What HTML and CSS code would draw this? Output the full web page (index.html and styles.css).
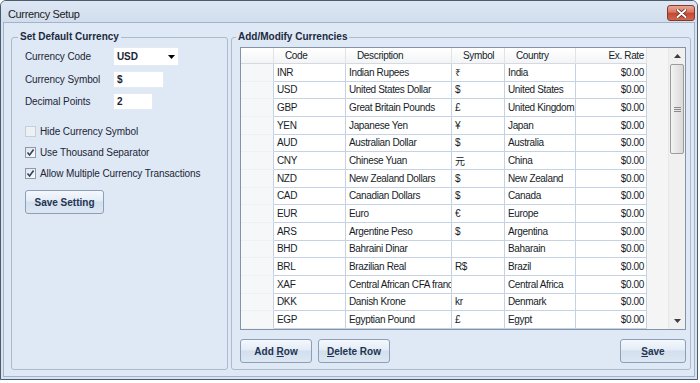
FILE: index.html
```html
<!DOCTYPE html>
<html lang="en">
<head>
    <meta charset="UTF-8">
    <meta name="viewport" content="width=device-width, initial-scale=1.0">
    <title>Currency Setup</title>
    <link rel="stylesheet" href="styles.css">
</head>
<body>

    <div class="window">
        <!-- title bar -->
        <div class="title-bar">
            <span class="title">Currency Setup</span>
            <button class="close-btn" aria-label="Close">
                <svg width="11" height="9" viewBox="0 0 11 9">
                    <path d="M1.5 1 L9.5 8 M9.5 1 L1.5 8" stroke="#5a1d12" stroke-width="3.4" stroke-linecap="round"/>
                    <path d="M1.5 1 L9.5 8 M9.5 1 L1.5 8" stroke="#ffffff" stroke-width="2" stroke-linecap="round"/>
                </svg>
            </button>
        </div>

        <div class="client">
            <!-- default currency settings -->
            <fieldset class="group group-default">
                <legend>Set Default Currency</legend>
                <div class="settings">
                    <div class="form-rows">
                        <div class="form-row">
                            <span class="form-label">Currency Code</span>
                            <div class="combo">
                                <span>USD</span>
                                <svg width="7" height="4" viewBox="0 0 7 4"><polygon points="0,0 7,0 3.5,4" fill="#000"/></svg>
                            </div>
                        </div>
                        <div class="form-row">
                            <span class="form-label">Currency Symbol</span>
                            <div class="text-box symbol-box">$</div>
                        </div>
                        <div class="form-row">
                            <span class="form-label">Decimal Points</span>
                            <div class="text-box decimal-box">2</div>
                        </div>
                    </div>

                    <div class="check-list">
                        <div class="check-row disabled">
                            <span class="check"></span>
                            <span>Hide Currency Symbol</span>
                        </div>
                        <div class="check-row">
                            <span class="check">
                                <svg width="9" height="9" viewBox="0 0 9 9"><path d="M1.5 4.5 L3.6 7 L7.6 1.5" fill="none" stroke="#34435c" stroke-width="1.6"/></svg>
                            </span>
                            <span>Use Thousand Separator</span>
                        </div>
                        <div class="check-row">
                            <span class="check">
                                <svg width="9" height="9" viewBox="0 0 9 9"><path d="M1.5 4.5 L3.6 7 L7.6 1.5" fill="none" stroke="#34435c" stroke-width="1.6"/></svg>
                            </span>
                            <span>Allow Multiple Currency Transactions</span>
                        </div>
                    </div>

                    <button class="btn save-setting-btn">Save Setting</button>
                </div>
            </fieldset>

            <!-- currency list -->
            <fieldset class="group group-currencies">
                <legend>Add/Modify Currencies</legend>
                <div class="currencies">
                    <div class="grid">
                        <div class="grid-table">
                            <div class="grid-row head">
                                <div class="cell row-head"></div>
                                <div class="cell">Code</div>
                                <div class="cell">Description</div>
                                <div class="cell">Symbol</div>
                                <div class="cell">Country</div>
                                <div class="cell num">Ex. Rate</div>
                            </div>
                            <div class="grid-row">
                                <div class="cell row-head"></div>
                                <div class="cell">INR</div>
                                <div class="cell">Indian Rupees</div>
                                <div class="cell">₹</div>
                                <div class="cell">India</div>
                                <div class="cell num">$0.00</div>
                            </div>
                            <div class="grid-row">
                                <div class="cell row-head"></div>
                                <div class="cell">USD</div>
                                <div class="cell">United States Dollar</div>
                                <div class="cell">$</div>
                                <div class="cell">United States</div>
                                <div class="cell num">$0.00</div>
                            </div>
                            <div class="grid-row">
                                <div class="cell row-head"></div>
                                <div class="cell">GBP</div>
                                <div class="cell">Great Britain Pounds</div>
                                <div class="cell">£</div>
                                <div class="cell">United Kingdom</div>
                                <div class="cell num">$0.00</div>
                            </div>
                            <div class="grid-row">
                                <div class="cell row-head"></div>
                                <div class="cell">YEN</div>
                                <div class="cell">Japanese Yen</div>
                                <div class="cell">¥</div>
                                <div class="cell">Japan</div>
                                <div class="cell num">$0.00</div>
                            </div>
                            <div class="grid-row">
                                <div class="cell row-head"></div>
                                <div class="cell">AUD</div>
                                <div class="cell">Australian Dollar</div>
                                <div class="cell">$</div>
                                <div class="cell">Australia</div>
                                <div class="cell num">$0.00</div>
                            </div>
                            <div class="grid-row">
                                <div class="cell row-head"></div>
                                <div class="cell">CNY</div>
                                <div class="cell">Chinese Yuan</div>
                                <div class="cell">元</div>
                                <div class="cell">China</div>
                                <div class="cell num">$0.00</div>
                            </div>
                            <div class="grid-row">
                                <div class="cell row-head"></div>
                                <div class="cell">NZD</div>
                                <div class="cell">New Zealand Dollars</div>
                                <div class="cell">$</div>
                                <div class="cell">New Zealand</div>
                                <div class="cell num">$0.00</div>
                            </div>
                            <div class="grid-row">
                                <div class="cell row-head"></div>
                                <div class="cell">CAD</div>
                                <div class="cell">Canadian Dollars</div>
                                <div class="cell">$</div>
                                <div class="cell">Canada</div>
                                <div class="cell num">$0.00</div>
                            </div>
                            <div class="grid-row">
                                <div class="cell row-head"></div>
                                <div class="cell">EUR</div>
                                <div class="cell">Euro</div>
                                <div class="cell">€</div>
                                <div class="cell">Europe</div>
                                <div class="cell num">$0.00</div>
                            </div>
                            <div class="grid-row">
                                <div class="cell row-head"></div>
                                <div class="cell">ARS</div>
                                <div class="cell">Argentine Peso</div>
                                <div class="cell">$</div>
                                <div class="cell">Argentina</div>
                                <div class="cell num">$0.00</div>
                            </div>
                            <div class="grid-row">
                                <div class="cell row-head"></div>
                                <div class="cell">BHD</div>
                                <div class="cell">Bahraini Dinar</div>
                                <div class="cell"></div>
                                <div class="cell">Baharain</div>
                                <div class="cell num">$0.00</div>
                            </div>
                            <div class="grid-row">
                                <div class="cell row-head"></div>
                                <div class="cell">BRL</div>
                                <div class="cell">Brazilian Real</div>
                                <div class="cell">R$</div>
                                <div class="cell">Brazil</div>
                                <div class="cell num">$0.00</div>
                            </div>
                            <div class="grid-row">
                                <div class="cell row-head"></div>
                                <div class="cell">XAF</div>
                                <div class="cell">Central African CFA franc</div>
                                <div class="cell"></div>
                                <div class="cell">Central Africa</div>
                                <div class="cell num">$0.00</div>
                            </div>
                            <div class="grid-row">
                                <div class="cell row-head"></div>
                                <div class="cell">DKK</div>
                                <div class="cell">Danish Krone</div>
                                <div class="cell">kr</div>
                                <div class="cell">Denmark</div>
                                <div class="cell num">$0.00</div>
                            </div>
                            <div class="grid-row">
                                <div class="cell row-head"></div>
                                <div class="cell">EGP</div>
                                <div class="cell">Egyptian Pound</div>
                                <div class="cell">£</div>
                                <div class="cell">Egypt</div>
                                <div class="cell num">$0.00</div>
                            </div>
                        </div>

                        <!-- vertical scrollbar -->
                        <div class="scrollbar">
                            <div class="scroll-arrow">
                                <svg width="7" height="4" viewBox="0 0 7 4"><polygon points="0,4 7,4 3.5,0" fill="#3c3c3c"/></svg>
                            </div>
                            <div class="scroll-thumb">
                                <svg width="7" height="5" viewBox="0 0 7 5"><path d="M0 0.5 H7 M0 2.5 H7 M0 4.5 H7" stroke="#8a8a8a" stroke-width="1"/></svg>
                            </div>
                            <div class="scroll-track"></div>
                            <div class="scroll-arrow">
                                <svg width="7" height="4" viewBox="0 0 7 4"><polygon points="0,0 7,0 3.5,4" fill="#3c3c3c"/></svg>
                            </div>
                        </div>
                    </div>

                    <div class="button-bar">
                        <button class="btn row-btn">Add <u>R</u>ow</button>
                        <button class="btn row-btn"><u>D</u>elete Row</button>
                        <button class="btn save-btn"><u>S</u>ave</button>
                    </div>
                </div>
            </fieldset>
        </div>
    </div>

</body>
</html>
```

FILE: styles.css
```css
/* base */
* {
    box-sizing: border-box;
}

body {
    margin: 0;
    background-color: #ffffff;
    font-family: 'Liberation Sans', Arial, 'Noto Sans', 'Noto Sans CJK SC', sans-serif;
    font-size: 10px;
    color: #1c2636;
}

/* window frame */
.window {
    width: 698px;
    height: 380px;
    border: 1px solid #4b5a6d;
    border-radius: 6px 6px 0 0;
    background-color: #d8e3f1;
    box-shadow: 0 3px 0 #c6e4ee;
    display: flex;
    flex-direction: column;
}

.title-bar {
    flex: none;
    height: 21px;
    display: flex;
    justify-content: space-between;
    align-items: flex-start;
    padding: 0 2px 0 7px;
    border-radius: 5px 5px 0 0;
    background: linear-gradient(#dde7f4, #d2deee);
}

.title {
    margin-top: 3px;
    line-height: 20px;
    font-size: 11px;
    letter-spacing: -0.35px;
    color: #1b1b1b;
}

.close-btn {
    margin-top: 4px;
    width: 28px;
    height: 16px;
    padding: 0;
    display: flex;
    align-items: center;
    justify-content: center;
    border: 1px solid #83392c;
    border-radius: 3px;
    background: linear-gradient(#eaa897 0%, #d87461 45%, #c3462f 50%, #d1674f 100%);
}

.client {
    flex: 1;
    margin: 0 2px 2px;
    display: flex;
    gap: 3px;
    padding: 8px 3px 6px 7px;
    border: 1px solid #a3b3c8;
    background-color: #dfe9f5;
}

/* group boxes */
.group {
    margin: 0;
    padding: 0;
    min-width: 0;
    border: 1px solid #abbacd;
    border-radius: 3px;
}

.group legend {
    padding: 0 2px;
    font-size: 10px;
    line-height: 12px;
    font-weight: bold;
    color: #1b2940;
}

.group-default {
    width: 217px;
    flex: none;
}
.group-default legend {
    margin-left: 6px;
}

.group-currencies {
    flex: 1;
}
.group-currencies legend {
    margin-left: 4px;
}

/* default currency form */
.settings {
    padding: 4px 0 0 13px;
    letter-spacing: -0.1px;
}

.form-rows {
    display: flex;
    flex-direction: column;
    gap: 5px;
}

.form-row {
    display: flex;
    align-items: center;
}

.form-label {
    width: 88px;
}

.combo {
    width: 66px;
    height: 19px;
    display: flex;
    align-items: center;
    justify-content: space-between;
    padding: 0 3px 0 3px;
    border: 1px solid #e3eaf3;
    background-color: #ffffff;
    font-weight: bold;
}

.text-box {
    height: 17px;
    display: flex;
    align-items: center;
    padding-left: 3px;
    border: 1px solid #e3eaf3;
    background-color: #ffffff;
    font-weight: bold;
}
.symbol-box { width: 51px; }
.decimal-box { width: 40px; }

.check-list {
    margin-top: 15px;
    display: flex;
    flex-direction: column;
    gap: 8px;
}

.check-row {
    height: 13px;
    display: flex;
    align-items: center;
    gap: 4px;
}

.check {
    width: 11px;
    height: 11px;
    display: flex;
    align-items: center;
    justify-content: center;
    border: 1px solid #8e9aab;
    background: linear-gradient(135deg, #dfe3e9, #fbfcfd);
}
.check-row.disabled .check {
    border-color: #c7ced7;
    background: #eef1f4;
}

/* buttons */
.btn {
    height: 24px;
    padding: 0;
    font-family: inherit;
    font-size: 10px;
    font-weight: bold;
    color: #233450;
    border: 1px solid #8d9eb7;
    border-radius: 3px;
    background: linear-gradient(#f4f8fd 0%, #e4ecf7 45%, #d3dfee 50%, #dde7f3 100%);
}

.save-setting-btn {
    margin-top: 10px;
    width: 79px;
}

/* currency grid */
.currencies {
    padding: 4px 4px 0 8px;
    display: flex;
    flex-direction: column;
}

.grid {
    height: 283px;
    display: flex;
    border: 1px solid #8293aa;
    background-color: #f5f5f5;
}

.grid-table {
    flex: 1;
    display: grid;
    grid-template-columns: 33px 72px 106px 53px 71px 71px;
    grid-template-rows: 16px repeat(15, 1fr);
    letter-spacing: -0.35px;
}

.grid-row {
    display: contents;
}

.cell {
    display: flex;
    align-items: center;
    padding: 0 2px 0 3px;
    overflow: hidden;
    white-space: nowrap;
    background-color: #ffffff;
    border-right: 1px solid #c4d2e4;
    border-bottom: 1px solid #c4d2e4;
    color: #161d28;
}

.cell.num {
    justify-content: flex-end;
}

.cell.row-head {
    background-color: #f6f7f9;
    border-bottom-color: #edf0f4;
}

.head .cell {
    padding-left: 11px;
    background: linear-gradient(#ffffff, #f3f4f6);
    border-right-color: #e1e3e6;
    border-bottom-color: #d6d9de;
}
.head .cell.num {
    padding-left: 0;
}

.scrollbar {
    width: 17px;
    flex: none;
    display: flex;
    flex-direction: column;
    background-color: #f0f0f0;
    border-left: 1px solid #e8e8e8;
}

.scroll-arrow {
    height: 16px;
    display: flex;
    align-items: center;
    justify-content: center;
}

.scroll-thumb {
    height: 90px;
    margin: 0 1px 0 1px;
    display: flex;
    align-items: center;
    justify-content: center;
    border: 1px solid #9c9c9c;
    border-radius: 2px;
    background: linear-gradient(90deg, #f3f3f3, #d9d9d9);
}

.scroll-track {
    flex: 1;
}

.button-bar {
    margin-top: 9px;
    display: flex;
    gap: 6px;
}

.row-btn {
    width: 72px;
}

.save-btn {
    width: 66px;
    margin-left: auto;
}
```
